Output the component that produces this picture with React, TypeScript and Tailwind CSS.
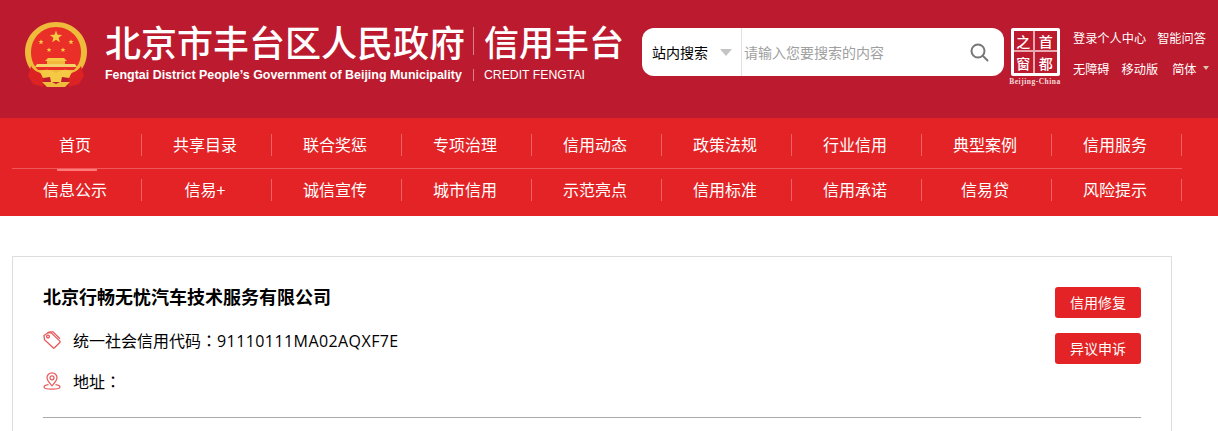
const CJK = 'font-["Noto_Sans_CJK_SC",sans-serif]';

const NAV_ROWS = [
  ['首页', '共享目录', '联合奖惩', '专项治理', '信用动态', '政策法规', '行业信用', '典型案例', '信用服务'],
  ['信息公示', '信易+', '诚信宣传', '城市信用', '示范亮点', '信用标准', '信用承诺', '信易贷', '风险提示'],
];

function Star({ x, y, r }: { x: number; y: number; r: number }) {
  const pts = Array.from({ length: 10 }, (_, i) => {
    const a = -Math.PI / 2 + (i * Math.PI) / 5;
    const d = i % 2 === 0 ? r : r * 0.42;
    return `${(x + d * Math.cos(a)).toFixed(2)},${(y + d * Math.sin(a)).toFixed(2)}`;
  }).join(' ');
  return <polygon points={pts} fill="#f6c945" />;
}

function Emblem() {
  return (
    <svg width="64" height="68" viewBox="0 0 64 68" className="shrink-0">
      <path d="M32 2C15 2 1 15 1 32c0 9 4 17 10 23h42c6-6 10-14 10-23C63 15 49 2 32 2z" fill="#eebb3a" />
      <path d="M32 7C18 7 7 18 7 32c0 7 2 13 7 18h36c5-5 7-11 7-18C57 18 46 7 32 7z" fill="#ea2f28" />
      <Star x={32} y={17} r={6.5} />
      <Star x={17} y={22} r={2.8} />
      <Star x={47} y={22} r={2.8} />
      <Star x={25} y={30} r={2.6} />
      <Star x={39} y={30} r={2.6} />
      <path d="M24 38h16l3 3H21z" fill="#f6c945" />
      <rect x="23" y="41" width="18" height="3" fill="#f3b93c" />
      <path d="M13 44h38l2 3H11z" fill="#f6d36a" />
      <path d="M7 46c3 5 8 7 13 8l-1 13-10-3-5-8z" fill="#dc2222" />
      <path d="M57 46c-3 5-8 7-13 8l1 13 10-3 5-8z" fill="#dc2222" />
      <path d="M16 52c6-4 10-2 16 1 6-3 10-5 16-1l-3 6-7-1-1 5h-10l-1-5-7 1z" fill="#f6c945" />
      <path d="M18 62h10l4 2 4-2h10l-5 5H23z" fill="#eebb3a" />
    </svg>
  );
}

function CapitalLogo() {
  return (
    <div className="ml-[6px] flex w-[50px] shrink-0 flex-col items-center">
      <div className="grid h-[48px] w-[49px] grid-cols-2 grid-rows-2 rounded-[2px] border-[3px] border-white bg-[#bc1a2e] text-[14px] leading-none font-medium text-white font-['Noto_Sans_CJK_SC',serif]">
        <span className="flex items-center justify-center border-r-2 border-b-2 border-[#e8a8b0]">之</span>
        <span className="flex items-center justify-center border-b-2 border-[#e8a8b0]">首</span>
        <span className="flex items-center justify-center border-r-2 border-[#e8a8b0]">窗</span>
        <span className="flex items-center justify-center">都</span>
      </div>
      <span className="mt-[1px] whitespace-nowrap text-[7.5px] leading-[9px] font-bold tracking-[0.5px] text-[#f4dcdc] font-['Liberation_Serif',serif]">
        Beijing-China
      </span>
    </div>
  );
}

function TagIcon() {
  return (
    <svg width="18" height="18" viewBox="0 0 18 18" fill="none" stroke="#e8585a" strokeWidth="1.3" className="shrink-0">
      <path d="M1 4.5 5 1.8h3.3l8.5 8.3a1 1 0 0 1 0 1.4l-5.3 5.3a1 1 0 0 1-1.4 0L1.5 8.8z" />
      <path d="M4.5 1.6 7 .8h3l7 7" />
      <circle cx="5" cy="5.6" r="1.4" />
    </svg>
  );
}

function PinIcon() {
  return (
    <svg width="18" height="18" viewBox="0 0 18 18" fill="none" stroke="#e8585a" strokeWidth="1.2" className="shrink-0">
      <path d="M9 13.8C6.5 11 4 8.6 4 5.8a5 5 0 0 1 10 0c0 2.8-2.5 5.2-5 8z" />
      <circle cx="9" cy="5.8" r="2" />
      <path d="M5.5 12.6C2.8 13 1 14 1 15c0 1.3 3.5 2.2 8 2.2s8-.9 8-2.2c0-1-1.8-2-4.5-2.4" />
    </svg>
  );
}

function NavRow({ items, active, top }: { items: string[]; active?: number; top?: boolean }) {
  return (
    <ul className={`flex items-start ${top ? 'h-[51px] border-b border-[#f0585c] pt-[16px]' : 'h-[47px] pt-[10px]'}`}>
      {items.map((item, i) => (
        <li key={item} className="relative flex h-[22px] w-[130px] items-center justify-center border-r border-[#ee6266] pr-[3px] pb-[2px] text-[16px] text-white">
          {item}
          {active === i && <span className="absolute top-[35px] left-[45px] h-[2px] w-[40px] bg-[#ff7a7a]" />}
        </li>
      ))}
    </ul>
  );
}

export default function App() {
  return (
    <div className={`h-[431px] overflow-hidden bg-white ${CJK}`}>
      <header className="flex h-[118px] bg-[#bc1a2e]">
        <div className="ml-[24px] mt-[20px]">
          <Emblem />
        </div>
        <div className="ml-[17px] mt-[19px] flex w-[537px] shrink-0 flex-col text-white">
          <div className="flex h-[43px] items-center">
            <span className="w-[358px] whitespace-nowrap text-[36px] leading-none font-medium">北京市丰台区人民政府</span>
            <span className="ml-[10px] h-[28px] w-px bg-[#dd7f8a]" />
            <span className="ml-[10px] whitespace-nowrap text-[35px] leading-none font-medium">信用丰台</span>
          </div>
          <div className="mt-[5px] flex h-[16px] items-center font-['Liberation_Sans',sans-serif]">
            <span className="w-[358px] whitespace-nowrap text-[12.45px] font-bold">Fengtai District People’s Government of Beijing Municipality</span>
            <span className="ml-[10px] h-[12px] w-px bg-[#dd7f8a]" />
            <span className="ml-[10px] whitespace-nowrap text-[12.25px]">CREDIT FENGTAI</span>
          </div>
        </div>
        <div className="mt-[28px] flex items-start">
          <div className="flex h-[48px] w-[362px] items-center rounded-[12px] bg-white">
            <div className="flex h-full w-[100px] items-center border-r border-[#e2e2e2] pl-[10px]">
              <span className="text-[14px] text-black">站内搜索</span>
              <span className="ml-[12px] h-0 w-0 border-x-[6px] border-t-[7px] border-x-transparent border-t-[#c4c4c4]" />
            </div>
            <span className="ml-[2px] flex-1 text-[14px] text-[#a0a0a0]">请输入您要搜索的内容</span>
            <svg width="20" height="20" viewBox="0 0 20 20" fill="none" stroke="#777" strokeWidth="2" className="mr-[15px]">
              <circle cx="9" cy="9" r="6.5" />
              <path d="m14 14 4.5 4.5" strokeLinecap="round" />
            </svg>
          </div>
          <CapitalLogo />
          <div className="ml-[13px] flex flex-col gap-[15px] pt-[2px] text-[12.2px] leading-[16px] text-white">
            <div className="flex gap-[11px] whitespace-nowrap">
              <span>登录个人中心</span>
              <span>智能问答</span>
            </div>
            <div className="flex items-center whitespace-nowrap">
              <span>无障碍</span>
              <span className="ml-[12px]">移动版</span>
              <span className="ml-[14px]">简体</span>
              <span className="ml-[6px] mb-[2px] h-0 w-0 border-x-[3px] border-t-[4px] border-x-transparent border-t-[#d8c9a8]" />
            </div>
          </div>
        </div>
      </header>

      <nav className="h-[98px] bg-[#e32325] px-[12px]">
        <div className="w-[1170px]">
          <NavRow items={NAV_ROWS[0]} active={0} top />
          <NavRow items={NAV_ROWS[1]} />
        </div>
      </nav>

      <main className="ml-[12px] mt-[40px] h-[300px] w-[1160px] border border-[#ddd] px-[30px] pt-[29px]">
        <div className="flex justify-between border-b border-[#aaa] pb-[24px]">
          <div className="text-black">
            <h1 className="text-[18px] leading-[20px] font-bold">北京行畅无忧汽车技术服务有限公司</h1>
            <p className="mt-[22px] flex h-[24px] items-center gap-[12px] text-[16px]">
              <TagIcon />
              <span>
                统一社会信用代码
                <span className="font-['Noto_Sans_CJK_TC',sans-serif]">：</span>
                <span className="font-['Open_Sans',sans-serif] tracking-[0.42px]">91110111MA02AQXF7E</span>
              </span>
            </p>
            <p className="mt-[17px] flex h-[24px] items-center gap-[12px] text-[16px]">
              <PinIcon />
              <span>
                地址<span className="font-['Noto_Sans_CJK_TC',sans-serif]">：</span>
              </span>
            </p>
          </div>
          <div className="mt-[1px] flex flex-col gap-[15px]">
            <button className="h-[31px] w-[86px] rounded-[3px] bg-[#e32325] text-[14px] text-white">信用修复</button>
            <button className="h-[31px] w-[86px] rounded-[3px] bg-[#e32325] text-[14px] text-white">异议申诉</button>
          </div>
        </div>
      </main>
    </div>
  );
}
